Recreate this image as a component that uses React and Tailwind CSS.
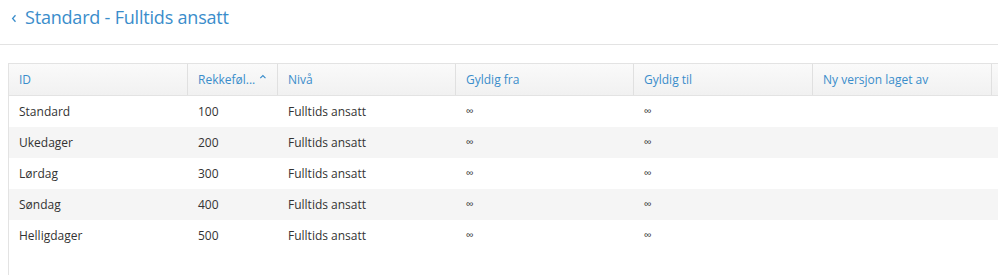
import React from "react";

const rows = [
  { id: "Standard", order: 100 },
  { id: "Ukedager", order: 200 },
  { id: "Lørdag", order: 300 },
  { id: "Søndag", order: 400 },
  { id: "Helligdager", order: 500 },
];

const cols = [
  { label: "ID", w: "w-[179px]" },
  { label: "Rekkeføl...", w: "w-[90px]", sort: true },
  { label: "Nivå", w: "w-[178px]" },
  { label: "Gyldig fra", w: "w-[178px]" },
  { label: "Gyldig til", w: "w-[179px]" },
  { label: "Ny versjon laget av", w: "w-[179px]" },
];

export default function App() {
  return (
    <div className="w-[998px] h-[275px] bg-white overflow-hidden font-['Open_Sans',sans-serif]">
      <div className="h-[45px] flex items-center px-[11px] border-b border-[#e3e3e3]">
        <button className="flex items-center gap-[8px] text-[#3a8dcb] -mt-[10px]">
          <svg width="6" height="9" viewBox="0 0 6 9" className="mt-[2px]">
            <path d="M4.5 1.2 L1.6 4.5 L4.5 7.8" fill="none" stroke="currentColor" strokeWidth="1.3" />
          </svg>
          <span className="text-[18px] tracking-[-0.2px] leading-none">Standard - Fulltids ansatt</span>
        </button>
      </div>
      <div className="pt-[18px] pl-[8px]">
        <div className="border-l border-[#e3e3e3] h-[212px]">
          <div className="flex h-[33px] border-y border-[#e3e3e3] bg-gradient-to-b from-[#fafafa] to-[#f1f1f1]">
            {cols.map((c) => (
              <div
                key={c.label}
                className={`${c.w} shrink-0 border-r border-[#e0e0e0] flex items-center px-[10px] text-[12px] text-[#3a8dcb]`}
              >
                <span>{c.label}</span>
                {c.sort && (
                  <svg width="12" height="9" viewBox="0 0 12 9" className="ml-[4px] -mt-[6px] text-[#3a8dcb]">
                    <path d="M2 7 L6 3 L10 7" fill="none" stroke="currentColor" strokeWidth="1.8" />
                  </svg>
                )}
              </div>
            ))}
            <div className="flex-1" />
          </div>
          {rows.map((r, i) => (
            <div
              key={r.id}
              className={`flex h-[31px] items-center text-[12px] text-[#333] ${i % 2 === 1 ? "bg-[#f5f5f5]" : "bg-white"}`}
            >
              <div className="w-[179px] shrink-0 px-[10px]">{r.id}</div>
              <div className="w-[90px] shrink-0 px-[10px]">{r.order}</div>
              <div className="w-[178px] shrink-0 px-[10px]">Fulltids ansatt</div>
              <div className="w-[178px] shrink-0 px-[10px] text-[11px]">∞</div>
              <div className="w-[179px] shrink-0 px-[10px] text-[11px]">∞</div>
              <div className="w-[179px] shrink-0 px-[10px]"></div>
              <div className="flex-1" />
            </div>
          ))}
        </div>
      </div>
    </div>
  );
}
